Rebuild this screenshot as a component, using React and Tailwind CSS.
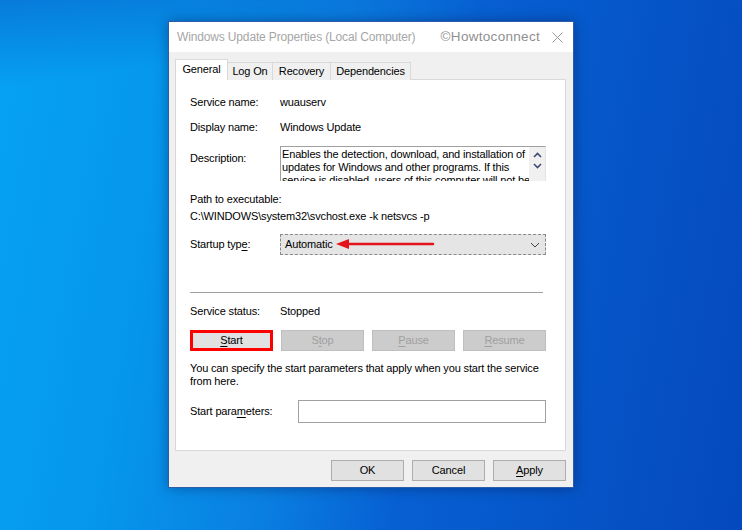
import React from 'react';

const U = ({ children }) => <span className="underline underline-offset-[2px]">{children}</span>;

function Btn({ children, disabled, className = '' }) {
  return (
    <button
      className={`h-[21px] w-[83px] border leading-none ${
        disabled ? 'bg-[#cccccc] border-[#bfbfbf] text-[#a0a0a0]' : 'bg-[#e1e1e1] border-[#adadad] text-black'
      } ${className}`}
    >
      {children}
    </button>
  );
}

function Row({ label, children, className = '' }) {
  return (
    <div className={`flex items-center h-[14px] ${className}`}>
      <div className="w-[90px] shrink-0">{label}</div>
      <div>{children}</div>
    </div>
  );
}

export default function App() {
  return (
    <div className="w-[742px] h-[530px] overflow-hidden pl-[168px] pt-[21px] font-['Liberation_Sans',Arial,sans-serif] text-[11px] tracking-[-0.15px] text-black bg-[linear-gradient(172deg,rgba(8,90,200,0.55)_0%,rgba(8,90,200,0)_14%),linear-gradient(100deg,#06a2f2_0%,#0597ec_22%,#0a7fe2_42%,#0760d2_58%,#0449bd_100%)]">
      {/* Dialog */}
      <div className="w-[406px] h-[467px] border border-[#2f5ca8] bg-[#f0f0f0] flex flex-col shadow-[0_0_12px_rgba(0,0,40,0.35)]">
        {/* Title bar */}
        <div className="h-[30px] bg-white flex items-center pl-[8px] pr-[10px]">
          <span className="text-[12px] text-[#a6a6a6] whitespace-nowrap">Windows Update Properties (Local Computer)</span>
          <span className="ml-auto mr-[12px] text-[13.5px] text-[#8f8f8f] tracking-[0.3px] whitespace-nowrap">©Howtoconnect</span>
          <svg width="11" height="11" viewBox="0 0 11 11">
            <path d="M0.5 0.5 L10.5 10.5 M10.5 0.5 L0.5 10.5" stroke="#9a9a9a" strokeWidth="1" />
          </svg>
        </div>

        <div className="pl-[6px] pt-[7px]">
          {/* Tabs */}
          <div className="flex items-end h-[21px] relative z-10">
            <div className="h-[21px] w-[53px] bg-white border border-b-0 border-[#d9d9d9] flex items-center justify-center pb-[1px]">General</div>
            <div className="h-[18px] w-[45px] bg-[#f0f0f0] border border-l-0 border-b-0 border-[#d9d9d9] flex items-center justify-center">Log On</div>
            <div className="h-[18px] w-[58px] bg-[#f0f0f0] border border-l-0 border-b-0 border-[#d9d9d9] flex items-center justify-center">Recovery</div>
            <div className="h-[18px] w-[80px] bg-[#f0f0f0] border border-l-0 border-b-0 border-[#d9d9d9] flex items-center justify-center">Dependencies</div>
          </div>

          {/* Panel */}
          <div className="w-[391px] h-[372px] -mt-px bg-white border border-[#d9d9d9] pl-[14px] pt-[15px] flex flex-col">
            <Row label="Service name:">wuauserv</Row>
            <Row label="Display name:" className="mt-[11px]">Windows Update</Row>

            <div className="flex mt-[12px] h-[35px]">
              <div className="w-[90px] shrink-0 pt-[4px]">Description:</div>
              <div className="w-[266px] h-[35px] border border-[#a0a0a0] border-r-[#e3e3e3] border-b-0 flex overflow-hidden">
                <div className="flex-1 pl-[1px] leading-[13px] pt-px whitespace-nowrap overflow-hidden">
                  Enables the detection, download, and installation of
                  <br />
                  updates for Windows and other programs. If this
                  <br />
                  service is disabled, users of this computer will not be
                </div>
                <div className="w-[16px] shrink-0 h-full bg-[#f0f0f0] flex flex-col items-center pt-[5px] gap-[5px]">
                  <svg width="9" height="6" viewBox="0 0 9 6"><path d="M1 5 L4.5 1.5 L8 5" fill="none" stroke="#3f4b74" strokeWidth="1.6" /></svg>
                  <svg width="9" height="6" viewBox="0 0 9 6"><path d="M1 1 L4.5 4.5 L8 1" fill="none" stroke="#3f4b74" strokeWidth="1.6" /></svg>
                </div>
              </div>
            </div>

            <div className="h-[14px] flex items-center mt-[11px]">Path to executable:</div>
            <div className="h-[14px] flex items-center mt-[3px]">C:\WINDOWS\system32\svchost.exe -k netsvcs -p</div>

            <div className="flex items-center mt-[11px] h-[21px]">
              <div className="w-[90px] shrink-0">Startup typ<U>e</U>:</div>
              <div className="relative w-[266px] h-[21px] bg-[#e5e5e5] border border-dashed border-[#8a8a8a] flex items-center pl-[4px]">
                Automatic
                <svg className="absolute right-[5px] top-[7px]" width="10" height="6" viewBox="0 0 10 6"><path d="M1 1 L5 5 L9 1" fill="none" stroke="#444" strokeWidth="1" /></svg>
                {/* annotation arrow */}
                <svg className="absolute left-[55px] top-[3px]" width="100" height="12" viewBox="0 0 100 12">
                  <path d="M10 6 L97 6" stroke="#e4121a" strokeWidth="2.5" strokeLinecap="round" />
                  <path d="M0 6 L13 1 L13 11 Z" fill="#e4121a" />
                </svg>
              </div>
            </div>

            <div className="w-[353px] h-px bg-[#a0a0a0] mt-[37px]" />

            <Row label="Service status:" className="mt-[11px]">Stopped</Row>

            <div className="flex gap-[8px] mt-[12px] h-[21px]">
              <Btn className="border-[3px] border-[#ff0000]"><U>S</U>tart</Btn>
              <Btn disabled>S<U>t</U>op</Btn>
              <Btn disabled><U>P</U>ause</Btn>
              <Btn disabled><U>R</U>esume</Btn>
            </div>

            <div className="mt-[11px] leading-[13px] whitespace-nowrap">
              You can specify the start parameters that apply when you start the service
              <br />
              from here.
            </div>

            <div className="flex items-center mt-[12px] h-[23px]">
              <div className="w-[108px] shrink-0">Start para<U>m</U>eters:</div>
              <div className="w-[248px] h-[23px] bg-white border border-[#a0a0a0]" />
            </div>
          </div>

          {/* Dialog buttons */}
          <div className="flex justify-end gap-[8px] mt-[9px] w-[391px]">
            <button className="h-[21px] w-[73px] bg-[#e1e1e1] border border-[#adadad]">OK</button>
            <button className="h-[21px] w-[73px] bg-[#e1e1e1] border border-[#adadad]">Cancel</button>
            <button className="h-[21px] w-[73px] bg-[#e1e1e1] border border-[#adadad]"><U>A</U>pply</button>
          </div>
        </div>
      </div>
    </div>
  );
}
